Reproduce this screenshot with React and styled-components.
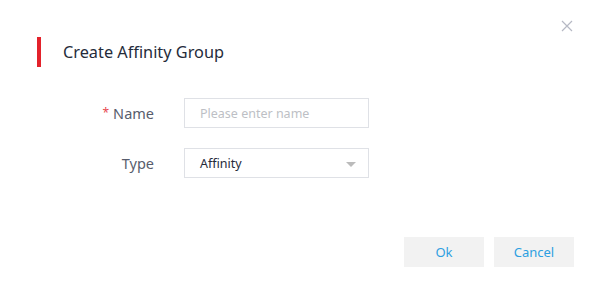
import React from 'react';
import styled, { createGlobalStyle } from 'styled-components';

const Global = createGlobalStyle`
    body {
        margin: 0;
        background: #fff;
        font-family: "Noto Sans", "Open Sans", sans-serif;
    }
`;

const Dialog = styled.div`
    position: relative;
    width: 589px;
    height: 285px;
    box-sizing: border-box;
    padding: 37px 15px 0 37px;
    background: #fff;
`;

const Close = styled.button`
    position: absolute;
    top: 19px;
    right: 15px;
    width: 14px;
    height: 14px;
    padding: 0;
    border: 0;
    background: none;
    cursor: pointer;
`;

const Header = styled.div`
    display: flex;
    align-items: center;
    height: 30px;
    gap: 22px;
`;

const Bar = styled.span`
    width: 4px;
    height: 30px;
    background: #e3222b;
`;

const Title = styled.h2`
    margin: 0;
    font-size: 16.3px;
    font-weight: 400;
    color: #252b3a;
`;

const Form = styled.div`
    display: flex;
    flex-direction: column;
    gap: 20px;
    margin-top: 31px;
`;

const Row = styled.div`
    display: flex;
    align-items: center;
    gap: 30px;
`;

const Label = styled.label`
    width: 117px;
    text-align: right;
    font-size: 14.5px;
    color: #575d6c;
`;

const Star = styled.span`
    color: #e8484f;
    font-size: 12px;
    vertical-align: 2px;
    margin-right: 4px;
`;

const Field = styled.div`
    position: relative;
    display: flex;
    align-items: center;
    width: 185px;
    height: 30px;
    box-sizing: border-box;
    border: 1px solid #dfe1e6;
    padding: 0 15px;
    font-size: 12.5px;
    color: ${(p) => (p.placeholder ? '#bdbfc5' : '#252b3a')};
`;

const Arrow = styled.span`
    position: absolute;
    right: 12px;
    top: 13px;
    width: 0;
    height: 0;
    border-left: 5px solid transparent;
    border-right: 5px solid transparent;
    border-top: 5px solid #bbbbbb;
`;

const Footer = styled.div`
    display: flex;
    justify-content: flex-end;
    gap: 10px;
    margin-top: 59px;
`;

const Button = styled.button`
    width: 80px;
    height: 30px;
    border: 0;
    background: #f2f2f2;
    color: #2d9fe1;
    font-family: inherit;
    font-size: 13px;
    cursor: pointer;
`;

const App = () => {
    return (
        <>
            <Global />
            <Dialog>
                <Close aria-label="close">
                    <svg width="14" height="14" viewBox="0 0 14 14">
                        <path d="M2 2L12 12M12 2L2 12" stroke="#b6b9c4" strokeWidth="1.2" />
                    </svg>
                </Close>
                <Header>
                    <Bar />
                    <Title>Create Affinity Group</Title>
                </Header>
                <Form>
                    <Row>
                        <Label>
                            <Star>*</Star>Name
                        </Label>
                        <Field placeholder="1">Please enter name</Field>
                    </Row>
                    <Row>
                        <Label>Type</Label>
                        <Field>
                            Affinity
                            <Arrow />
                        </Field>
                    </Row>
                </Form>
                <Footer>
                    <Button>Ok</Button>
                    <Button>Cancel</Button>
                </Footer>
            </Dialog>
        </>
    );
};

export default App;
